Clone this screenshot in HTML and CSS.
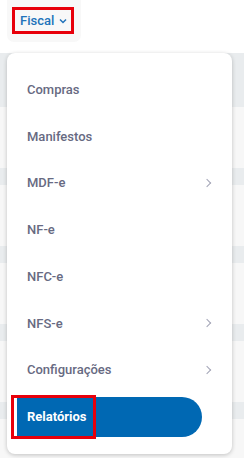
FILE: index.html
```html
<!DOCTYPE html>
<html lang="pt-BR">
<head>
  <meta charset="UTF-8">
  <meta name="viewport" content="width=device-width, initial-scale=1.0">
  <title>Fiscal - Menu</title>
  <link rel="stylesheet" href="styles.css">
</head>
<body>
  <div class="page">
    <div class="topbar">
      <div class="tab">
        <span class="tab-label">Fiscal</span>
        <svg class="tab-caret" width="8" height="6" viewBox="0 0 8 6">
          <path d="M1 1.5 L4 4.5 L7 1.5" fill="none" stroke="currentColor" stroke-width="1.5"/>
        </svg>
      </div>
    </div>

    <!-- page rows behind the dropdown -->
    <div class="rows">
      <div class="row-head"></div>
      <div class="row"></div>
      <div class="row-sep"></div>
      <div class="row"></div>
      <div class="row-sep"></div>
      <div class="row"></div>
      <div class="row-sep"></div>
      <div class="row"></div>
      <div class="row-sep"></div>
      <div class="row"></div>
    </div>

    <ul class="menu">
      <li class="menu-item">Compras</li>
      <li class="menu-item">Manifestos</li>
      <li class="menu-item has-sub">MDF-e</li>
      <li class="menu-item">NF-e</li>
      <li class="menu-item">NFC-e</li>
      <li class="menu-item has-sub">NFS-e</li>
      <li class="menu-item has-sub">Configurações</li>
      <li class="menu-item active"><span class="pill">Relatórios</span></li>
    </ul>

    <div class="mark mark-tab"></div>
    <div class="mark mark-item"></div>
  </div>
</body>
</html>
```

FILE: styles.css
```css
* {
  margin: 0;
  padding: 0;
  box-sizing: border-box;
}

body {
  font-family: Roboto, "Noto Sans", sans-serif;
  background: #fff;
  width: 244px;
  height: 458px;
  overflow: hidden;
}

.page {
  position: relative;
  height: 458px;
}

.topbar {
  height: 53px;
  padding-left: 7px;
}

.tab {
  width: 74px;
  height: 42px;
  background: #f8f8f8;
  border-radius: 0 0 7px 7px;
  display: flex;
  align-items: center;
  padding: 0 0 2px 13px;
  color: #2273ba;
}

.tab-label {
  font-size: 13px;
  font-weight: 500;
}

.tab-caret {
  margin-left: 5px;
  margin-top: 1px;
}

.rows {
  display: flex;
  flex-direction: column;
}

.row-head {
  height: 54px;
  background: #e9ecee;
}

.row {
  height: 61px;
  background: #f7f7f7;
}

.row-sep {
  height: 17px;
  background: #e9ecee;
}

.menu {
  position: absolute;
  top: 53px;
  left: 7px;
  width: 225px;
  height: 401px;
  background: #fff;
  border-radius: 8px;
  box-shadow: 0 1px 4px rgba(0, 0, 0, 0.22);
  list-style: none;
  padding-top: 13px;
}

.menu-item {
  position: relative;
  height: 46.75px;
  display: flex;
  align-items: center;
  padding-left: 20px;
  font-size: 13px;
  font-weight: 500;
  color: #676a82;
}

.has-sub::after {
  content: "";
  position: absolute;
  left: 197px;
  top: 50%;
  width: 5px;
  height: 5px;
  margin-top: -3px;
  border-top: 1.3px solid #a2a4b6;
  border-right: 1.3px solid #a2a4b6;
  transform: rotate(45deg);
}

.active {
  padding-left: 10px;
}

.pill {
  display: flex;
  align-items: center;
  width: 185px;
  height: 40px;
  padding-left: 10px;
  background: #0068b3;
  border-radius: 0 20px 20px 0;
  color: #fff;
  font-weight: 700;
}

.mark {
  position: absolute;
  border: 3px solid #e8000b;
}

.mark-tab {
  left: 12px;
  top: 7px;
  width: 62px;
  height: 27px;
}

.mark-item {
  left: 11px;
  top: 395px;
  width: 85px;
  height: 44px;
}
```
